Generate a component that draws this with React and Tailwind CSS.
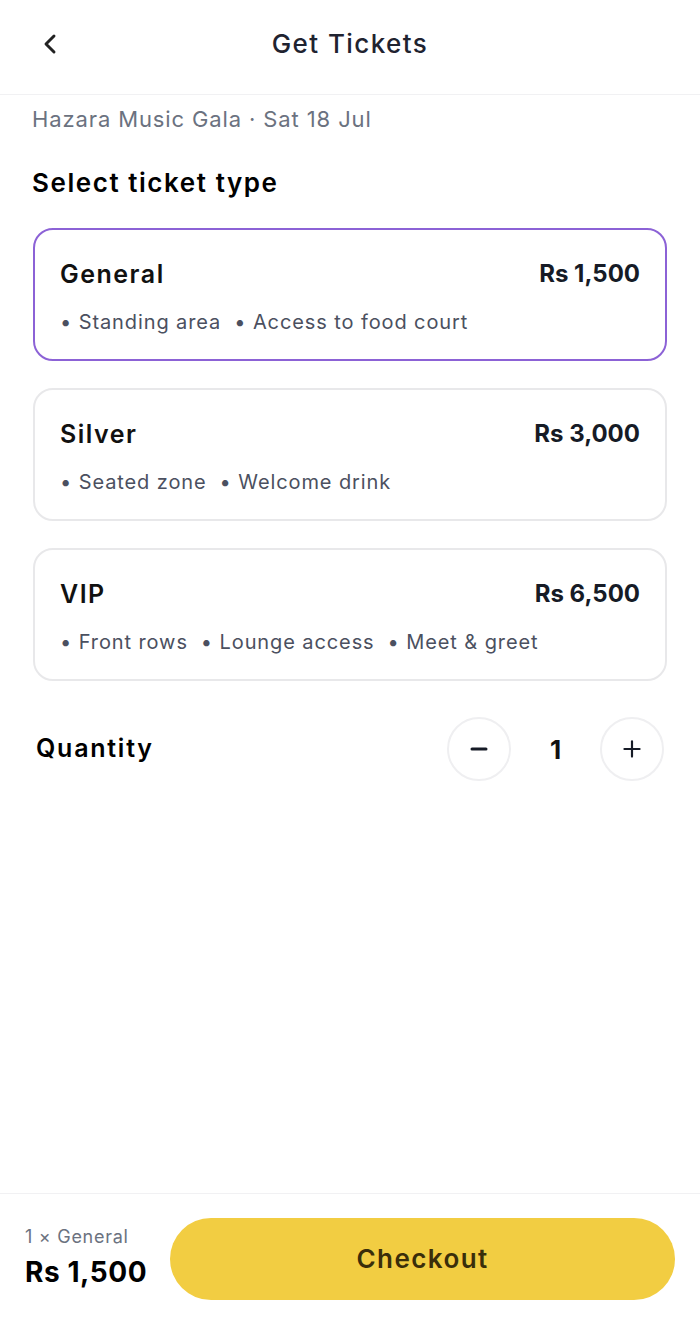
import { ChevronLeft, Minus, Plus } from "lucide-react";
import { useState } from "react";

const tickets = [
  {
    id: "general",
    name: "General",
    price: "Rs 1,500",
    perks: ["Standing area", "Access to food court"],
  },
  {
    id: "silver",
    name: "Silver",
    price: "Rs 3,000",
    perks: ["Seated zone", "Welcome drink"],
  },
  {
    id: "vip",
    name: "VIP",
    price: "Rs 6,500",
    perks: ["Front rows", "Lounge access", "Meet & greet"],
  },
];

const App = () => {
  const [selected, setSelected] = useState("general");
  const [qty, setQty] = useState(1);
  const ticket = tickets.find((t) => t.id === selected);

  return (
    <div className="min-h-[1321px] flex flex-col bg-white font-['Inter',sans-serif] text-[#111827]">
      {/* Header */}
      <div className="h-[95px] border-b border-[#f1f1f3] flex items-center relative">
        <button className="absolute left-[34px] top-[28px] text-[#222]">
          <ChevronLeft size={32} strokeWidth={2.2} />
        </button>
        <h1 className="w-full text-center text-[26px] font-medium tracking-[0.055em] text-[#1f2330] -mt-[7px]">
          Get Tickets
        </h1>
      </div>

      {/* Content */}
      <div className="flex-1 px-[33px]">
        <p className="text-[22px] text-[#6b7280] tracking-[0.04em] mt-[8px] leading-[32px] -ml-[1px]">
          Hazara Music Gala · Sat 18 Jul
        </p>
        <h2 className="text-[26px] font-semibold text-black tracking-[0.06em] mt-[31px] leading-[34px] -ml-[1px]">
          Select ticket type
        </h2>

        <div className="mt-[28px] flex flex-col gap-[27px]">
          {tickets.map((t) => (
            <div
              key={t.id}
              onClick={() => setSelected(t.id)}
              className={`cursor-pointer h-[133px] rounded-[20px] border-2 px-[25px] pt-[28px] ${
                selected === t.id ? "border-[#8c62d6]" : "border-[#e8e8ea]"
              }`}
            >
              <div className="flex items-center justify-between">
                <span className="text-[25px] font-semibold text-[#111] tracking-[0.06em] leading-[32px]">
                  {t.name}
                </span>
                <span className="text-[24px] font-bold text-[#161b26] leading-[32px]">
                  {t.price}
                </span>
              </div>
              <div className="mt-[18px] flex gap-[13px] text-[20px] text-[#4b5060] tracking-[0.045em] leading-[28px]">
                {t.perks.map((p) => (
                  <span key={p}>• {p}</span>
                ))}
              </div>
            </div>
          ))}
        </div>

        {/* Quantity */}
        <div className="mt-[36px] flex items-center justify-between pl-[3px] pr-[3px]">
          <span className="text-[25px] font-semibold text-black tracking-[0.07em]">
            Quantity
          </span>
          <div className="flex items-center">
            <button
              onClick={() => setQty(Math.max(1, qty - 1))}
              className="w-[64px] h-[64px] rounded-full border-2 border-[#efeff1] flex items-center justify-center text-[#161b26]"
            >
              <Minus size={24} strokeWidth={3} />
            </button>
            <span className="w-[89px] text-center text-[26px] font-bold text-[#111]">
              {qty}
            </span>
            <button
              onClick={() => setQty(qty + 1)}
              className="w-[64px] h-[64px] rounded-full border-2 border-[#efeff1] flex items-center justify-center text-[#161b26]"
            >
              <Plus size={26} strokeWidth={2} />
            </button>
          </div>
        </div>
      </div>

      {/* Footer */}
      <div className="h-[128px] border-t border-[#f1f1f3] flex items-center px-[25px] gap-[23px]">
        <div className="flex flex-col">
          <span className="text-[18px] text-[#6b7280] tracking-[0.04em] leading-[24px]">
            {qty} × {ticket.name}
          </span>
          <span className="text-[28px] font-bold text-black tracking-[0.02em] leading-[38px] mt-[4px]">
            {ticket.price}
          </span>
        </div>
        <button className="flex-1 h-[82px] rounded-full bg-[#f2cd42] text-[26px] font-semibold tracking-[0.055em] text-[#3a2e0a] mt-[2px]">
          Checkout
        </button>
      </div>
    </div>
  );
};

export default App;
